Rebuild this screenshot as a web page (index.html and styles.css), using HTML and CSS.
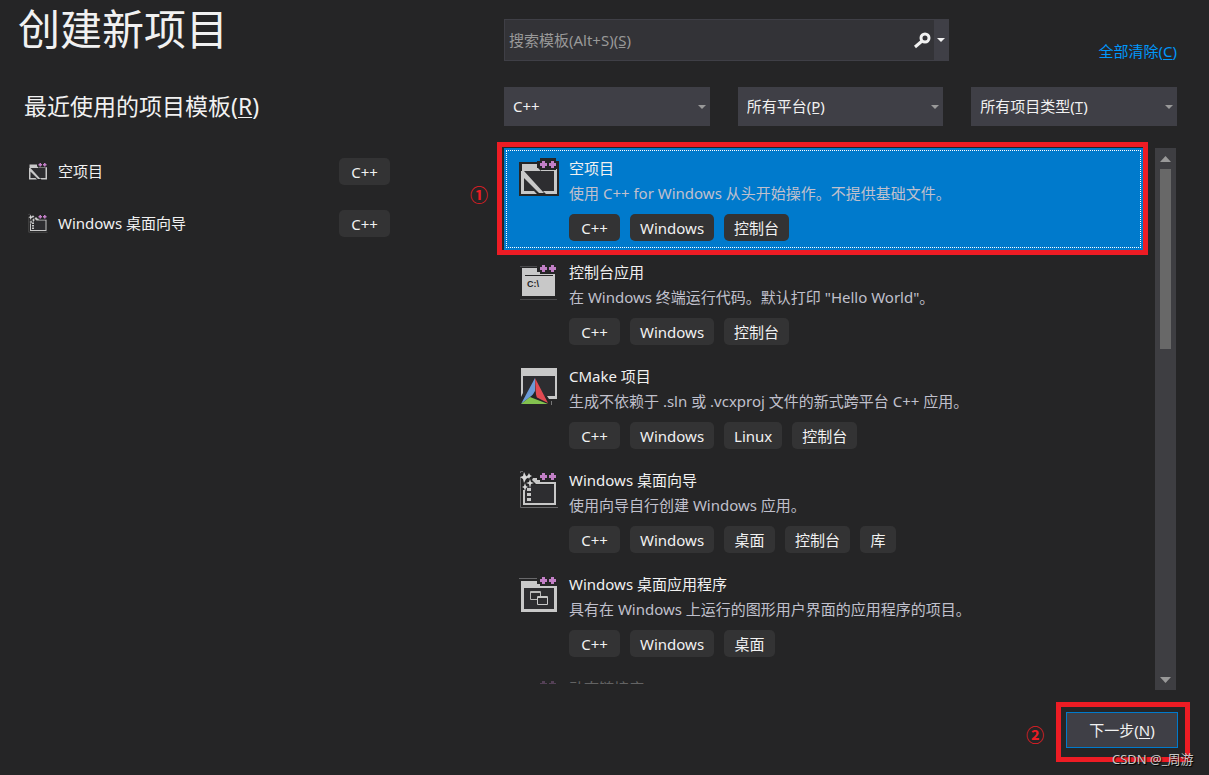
FILE: index.html
```html
<!DOCTYPE html>
<html lang="zh-CN">
<head>
<meta charset="utf-8">
<meta name="viewport" content="width=device-width, initial-scale=1">
<title>创建新项目</title>
<link rel="stylesheet" href="styles.css">
</head>
<body>
<svg class="sprite" aria-hidden="true">
  <symbol id="plusplus" viewBox="0 0 40 40">
    <path fill="#252526" d="M21 1h16v3h3v7h-3v2H21v-2h-3V4h3z"/>
    <path fill="#c27fc6" d="M23 4h3v2h2v3h-2v2h-3V9h-2V6h2zM32 4h3v2h2v3h-2v2h-3V9h-2V6h2z"/>
  </symbol>
  <symbol id="empty" viewBox="0 0 40 40">
    <path fill="#252526" d="M0 5h40v34H0z"/>
    <path fill="#2d2d30" d="M4 14h32v21H4z"/>
    <path fill="#c8c8c8" d="M3 7h16v4l3 3H3zM22 12h16v25H27l-3-3h11V14H22zM2 17l3 3v14h10l3 3H2zM2 14h3l20 22h-5L2 18z"/>
    <use href="#plusplus"/>
  </symbol>
  <symbol id="cmake" viewBox="0 0 40 40">
    <path fill="#c8c8c8" d="M2 3h36v31h-8l-2-3h8V11H4v17l-2 4z"/>
    <path fill="#2d2d30" d="M4 11h32v20H4z"/>
    <path fill="#6b9bd8" d="M16 13v15L2 39z"/>
    <path fill="#e24a52" d="M16 13l13 25-12-6z"/>
    <path fill="#83c24f" d="M2 39l9-7 18 7z"/>
    <path fill="#252526" d="M16 26l2 7-5-2z"/>
    <path stroke="#777" d="M32.500 36v4"/>
  </symbol>
  <symbol id="wizard" viewBox="0 0 40 40">
    <path stroke="#68686a" fill="none" d="M1.500 8v30.500H39M1.500 4V2.500H4"/>
    <path fill="#2d2d30" d="M6 16h29v18H6z"/>
    <path fill="#c8c8c8" d="M4 21h2v13h29V15H17l-4-4 1-2h6l3 4h14v23H4z"/>
    <path fill="#c8c8c8" d="M8 19h4v3H8zM8 24h4v3H8zM8 29h4v3H8z"/>
    <path fill="#d8d8d8" d="M5 3l2 4 3 1-3 2-2 4-1-4-3-2 3-1zM11 10l1 3 3 1-3 1-1 4-1-4-3-1 3-1zM6 14l1 3 2 1-2 1-1 3-1-3-2-1 2-1zM10 4l1 2 2 1-2 1-1 2-1-2-1-1 1-1z"/>
    <use href="#plusplus"/>
  </symbol>
  <symbol id="desktop" viewBox="0 0 40 40">
    <path stroke="#68686a" d="M0 5.500h18"/>
    <path fill="#c8c8c8" d="M2 8h18l3 5h15v26H2z"/>
    <path fill="#2d2d30" d="M5 15h30v21H5z"/>
    <path fill="none" stroke="#b8b8b8" d="M11.500 18.500h10v8h-10zM11 19.500h11"/>
    <path fill="#2d2d30" stroke="#c8c8c8" d="M18.500 23.500h10v8h-10zM18 24.500h11"/>
    <use href="#plusplus"/>
  </symbol>
</svg>

<main class="page">
  <section class="recent">
    <h1 class="title">创建新项目</h1>
    <h2 class="subtitle">最近使用的项目模板(<u>R</u>)</h2>
    <ul class="recent-list">
      <li class="recent-row">
        <svg class="icon-small"><use href="#empty"/></svg>
        <span class="recent-name">空项目</span>
        <span class="tag">C++</span>
      </li>
      <li class="recent-row">
        <svg class="icon-small"><use href="#wizard"/></svg>
        <span class="recent-name">Windows 桌面向导</span>
        <span class="tag">C++</span>
      </li>
    </ul>
  </section>

  <section class="browse">
    <div class="search-row">
      <div class="search">
        <input class="search-input" type="text" aria-label="搜索模板" placeholder="搜索模板(Alt+S)(S̲)">
        <button class="search-go" type="button" aria-label="搜索">
          <svg class="magnifier" viewBox="0 0 17 17"><circle cx="11" cy="6" r="4" fill="none" stroke="#f1f1f1" stroke-width="3"/><path d="M8 9l-7 6" stroke="#f1f1f1" stroke-width="3"/></svg>
        </button>
        <button class="search-more" type="button" aria-label="搜索选项"><svg class="arrow" viewBox="0 0 8 4"><path d="M0 0h8L4 4z" fill="#f1f1f1"/></svg></button>
      </div>
      <a class="clear" href="#">全部清除(<u>C</u>)</a>
    </div>

    <div class="filters">
      <div class="filter"><select class="filter-select" aria-label="语言"><option>C++</option></select><svg class="arrow filter-arrow" viewBox="0 0 8 4"><path d="M0 0h8L4 4z" fill="#999"/></svg></div>
      <div class="filter"><select class="filter-select" aria-label="平台"><option>所有平台(P̲)</option></select><svg class="arrow filter-arrow" viewBox="0 0 8 4"><path d="M0 0h8L4 4z" fill="#999"/></svg></div>
      <div class="filter"><select class="filter-select" aria-label="项目类型"><option>所有项目类型(T̲)</option></select><svg class="arrow filter-arrow" viewBox="0 0 8 4"><path d="M0 0h8L4 4z" fill="#999"/></svg></div>
    </div>

    <div class="results">
      <ul class="templates">
        <li class="template selected">
          <svg class="icon"><use href="#empty"/></svg>
          <div class="info">
            <h3 class="name">空项目</h3>
            <p class="desc">使用 C++ for Windows 从头开始操作。不提供基础文件。</p>
            <div class="tags"><span class="tag">C++</span><span class="tag">Windows</span><span class="tag">控制台</span></div>
          </div>
        </li>
        <li class="template">
          <svg class="icon" viewBox="0 0 40 40">
            <path stroke="#4a4a4c" d="M1 5.500h17M1 38.500h37"/>
            <path fill="#c8c8c8" d="M3 7h33v28H3z"/>
            <path stroke="#252526" d="M6 14.500h28"/>
            <text x="8" y="26" class="prompt">C:\</text>
            <use href="#plusplus"/>
          </svg>
          <div class="info">
            <h3 class="name">控制台应用</h3>
            <p class="desc">在 Windows 终端运行代码。默认打印 "Hello World"。</p>
            <div class="tags"><span class="tag">C++</span><span class="tag">Windows</span><span class="tag">控制台</span></div>
          </div>
        </li>
        <li class="template">
          <svg class="icon"><use href="#cmake"/></svg>
          <div class="info">
            <h3 class="name">CMake 项目</h3>
            <p class="desc">生成不依赖于 .sln 或 .vcxproj 文件的新式跨平台 C++ 应用。</p>
            <div class="tags"><span class="tag">C++</span><span class="tag">Windows</span><span class="tag">Linux</span><span class="tag">控制台</span></div>
          </div>
        </li>
        <li class="template">
          <svg class="icon"><use href="#wizard"/></svg>
          <div class="info">
            <h3 class="name">Windows 桌面向导</h3>
            <p class="desc">使用向导自行创建 Windows 应用。</p>
            <div class="tags"><span class="tag">C++</span><span class="tag">Windows</span><span class="tag">桌面</span><span class="tag">控制台</span><span class="tag">库</span></div>
          </div>
        </li>
        <li class="template">
          <svg class="icon"><use href="#desktop"/></svg>
          <div class="info">
            <h3 class="name">Windows 桌面应用程序</h3>
            <p class="desc">具有在 Windows 上运行的图形用户界面的应用程序的项目。</p>
            <div class="tags"><span class="tag">C++</span><span class="tag">Windows</span><span class="tag">桌面</span></div>
          </div>
        </li>
        <li class="template fading">
          <svg class="icon"><use href="#plusplus"/></svg>
          <div class="info"><h3 class="name">动态链接库(DLL)</h3></div>
        </li>
      </ul>
      <div class="scrollbar" aria-hidden="true">
        <svg class="scroll-arrow" viewBox="0 0 11 6"><path d="M0 6h11L5.500 0z" fill="#999"/></svg>
        <div class="track"><div class="thumb"></div></div>
        <svg class="scroll-arrow" viewBox="0 0 11 6"><path d="M0 0h11L5.500 6z" fill="#999"/></svg>
      </div>
      <div class="callout callout-item"></div>
      <span class="step step-one">①</span>
    </div>

    <footer class="footer">
      <span class="step">②</span>
      <div class="next-wrap">
        <button class="next" type="button">下一步(<u>N</u>)</button>
        <div class="callout callout-next"></div>
        <span class="watermark">CSDN @_周游</span>
      </div>
    </footer>
  </section>
</main>
</body>
</html>
```
FILE: styles.css
```css
* { box-sizing: border-box; }

body {
  margin: 0;
  background: #252526;
  color: #f1f1f1;
  font: 15px/20px "Noto Sans", "Noto Sans CJK SC", sans-serif;
}

h1, h2, h3, p, ul { margin: 0; padding: 0; font-weight: 400; }
ul { list-style: none; }
button, input, select { font: inherit; color: inherit; border: 0; border-radius: 0; margin: 0; }
u { text-underline-offset: 2px; text-decoration-thickness: 1px; }

.sprite { position: absolute; width: 0; height: 0; }
.prompt { font: 700 9px "Liberation Sans", sans-serif; fill: #252526; }

.page {
  display: grid;
  grid-template-columns: minmax(0, 372fr) minmax(0, 673fr);
  column-gap: 114px;
  height: 100vh;
  min-height: 480px;
  padding: 0 32px 0 18px;
  overflow: hidden;
}

.title { font-size: 42px; line-height: 58px; }
.subtitle { margin-top: 32px; padding-left: 6px; font-size: 23px; line-height: 32px; }
.recent-list { margin-top: 23px; }
.recent-row { display: flex; align-items: center; height: 52px; padding-left: 10px; }
.icon-small { width: 20px; height: 20px; margin-right: 10px; }
.recent-name { flex: 1; }

.tag {
  display: inline-block;
  min-width: 51px;
  height: 27px;
  padding: 0 10px;
  border-radius: 5px;
  background: #333334;
  line-height: 28px;
  text-align: center;
}
.tag:last-child:not(:nth-child(-n+4)) { min-width: 36px; }

.browse { display: flex; flex-direction: column; min-height: 0; padding: 19px 0 27px; }

.search-row { display: flex; justify-content: space-between; }
.search {
  display: flex;
  flex: 0 1 445px;
  height: 42px;
  border: 1px solid #3f3f46;
  background: #333337;
}
.search-input { flex: 1; min-width: 0; padding: 0 4px; background: none; }
.search-input::placeholder { color: #999; opacity: 1; }
.search-go { width: 20px; padding: 0; background: none; }
.magnifier { display: block; width: 17px; height: 17px; }
.search-more { width: 14px; padding: 0 3px; background: #3f3f46; }
.arrow { display: block; width: 8px; height: 4px; }
.clear { padding-top: 22px; color: #0097fb; text-decoration: none; }

.filters {
  display: grid;
  grid-template-columns: repeat(3, minmax(0, 1fr));
  column-gap: 28px;
  margin-top: 26px;
}
.filter { position: relative; }
.filter-select {
  display: block;
  width: 100%;
  height: 39px;
  padding: 0 20px 2px 9px;
  appearance: none;
  background: #3f3f46;
}
.filter-arrow { position: absolute; right: 4px; top: 18px; pointer-events: none; }

.results { position: relative; display: flex; flex: 1; min-height: 0; margin-top: 22px; }
.templates { flex: 1; min-width: 0; margin: 0 12px 6px 0; overflow: hidden; }
.template { display: flex; height: 102px; margin-bottom: 2px; padding: 9px 15px; gap: 10px; }
.selected { background: #007acc; outline: 1px dotted #fff; outline-offset: -3px; }
.fading { opacity: 0.3; }
.icon { flex: none; width: 40px; height: 40px; }
.info { min-width: 0; }
.name { font-size: 15px; line-height: 22px; }
.desc { margin-top: 4px; color: #c0c0cc; white-space: nowrap; }
.tags { display: flex; gap: 10px; margin-top: 11px; }

.scrollbar {
  display: flex;
  flex-direction: column;
  align-items: center;
  width: 21px;
  margin-right: 1px;
  padding: 8px 0 7px;
  background: #3e3e42;
}
.scroll-arrow { flex: none; width: 11px; height: 6px; }
.track { flex: 1; width: 11px; padding: 7px 0; }
.thumb { height: 36%; background: #686868; }

.callout { position: absolute; border: 5px solid #ed1c24; pointer-events: none; }
.callout-item { left: -7px; right: 29px; top: -6px; height: 113px; }
.callout-next { inset: -10px -12px -14px -10px; }
.step { color: #ed1c24; font: 700 18px/20px "Noto Sans CJK SC", sans-serif; }
.step-one { position: absolute; left: -34px; top: 36px; }

.footer { display: flex; justify-content: flex-end; align-items: center; gap: 22px; margin: 22px -1px 0 0; }
.footer .step { padding-top: 8px; }
.next-wrap { position: relative; }
.next { display: block; width: 112px; height: 36px; padding: 0; border: 1px solid #007acc; background: #3f3f46; }
.watermark {
  position: absolute;
  left: 46px;
  top: 38px;
  color: #c8c8c8;
  font-size: 13px;
  line-height: 18px;
  white-space: nowrap;
  text-shadow: 1px 1px 1px #000;
}
```
